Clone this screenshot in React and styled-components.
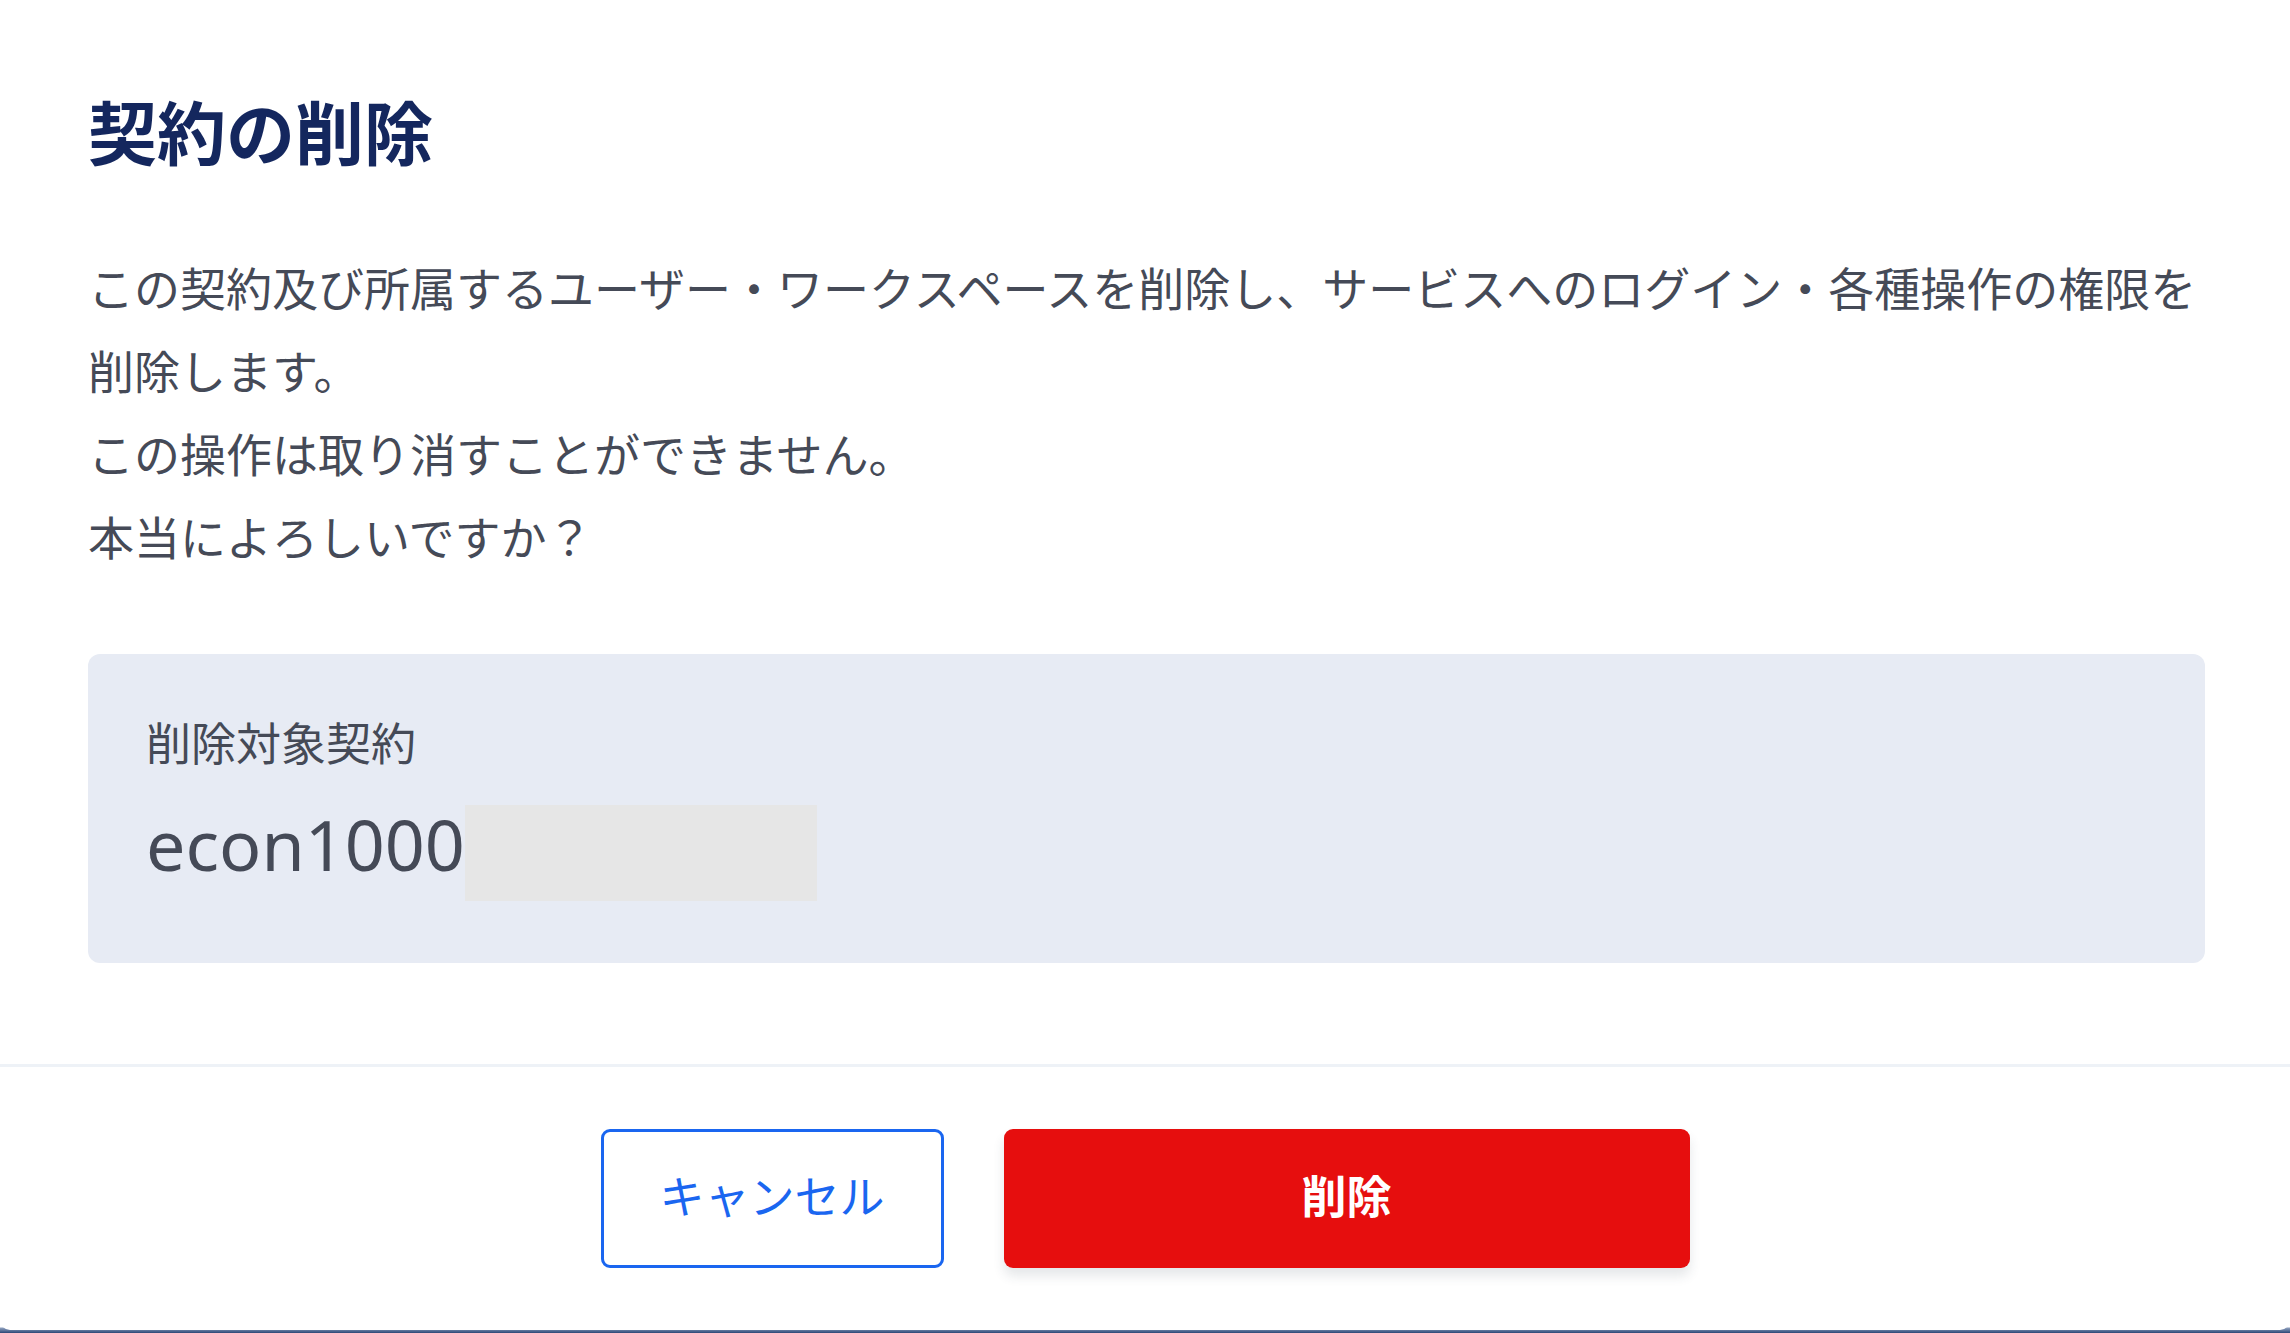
import React from "react";
import styled, { createGlobalStyle } from "styled-components";

const GlobalStyle = createGlobalStyle`
  * {
    box-sizing: border-box;
  }
  html, body {
    margin: 0;
    padding: 0;
  }
  body {
    background: #2f4b7b;
    font-family: "Noto Sans CJK JP", "Noto Sans", sans-serif;
  }
`

const Page = styled.div`
  display: flex;
  flex-direction: column;
  height: 1333px;
  padding-bottom: 5px;
  background: linear-gradient(to bottom, #ffffff 0, #ffffff calc(100% - 6px), #8d9fbd calc(100% - 5px), #2c4676 100%);
`
const Modal = styled.div`
  flex: 1;
  display: flex;
  flex-direction: column;
  background: #ffffff;
  border-radius: 0 0 10px 10px;
`
const Body = styled.div`
  padding: 96px 85px 101px 88px;
`
const Title = styled.h2`
  margin: 0;
  font-size: 69px;
  line-height: 68px;
  font-weight: 700;
  color: #14275e;
`
const Message = styled.p`
  margin: 81px -6px 0 0;
  font-size: 46px;
  line-height: 83px;
  color: #454a57;
`
const TargetBox = styled.div`
  margin-top: 77px;
  background: #e7ebf4;
  border-radius: 12px;
  padding: 58px 58px 62px 58px;
`
const TargetLabel = styled.div`
  font-size: 45px;
  line-height: 60px;
  color: #454a57;
`
const TargetValue = styled.div`
  display: flex;
  align-items: flex-start;
  margin-top: 33px;
  height: 96px;
`
const ValueText = styled.span`
  font-family: "Noto Sans", "Noto Sans CJK JP", sans-serif;
  font-size: 70px;
  line-height: 78px;
  color: #454a57;
`
const Redacted = styled.span`
  display: block;
  width: 352px;
  height: 96px;
  background: #e6e6e6;
`
const Footer = styled.div`
  display: flex;
  justify-content: center;
  gap: 60px;
  border-top: 3px solid #eef2f7;
  padding: 62px 0;
`
const Button = styled.button`
  width: ${p => p.$wide ? "686px" : "343px"};
  height: 139px;
  padding: 0 0 8px 0;
  border-radius: 9px;
  font-family: "Noto Sans CJK JP", sans-serif;
  font-size: 45px;
  cursor: pointer;
  ${p => p.$danger ? `
    background: #e60e0e;
    border: none;
    color: #ffffff;
    font-weight: 700;
    box-shadow: 0 8px 12px rgba(40, 60, 70, 0.12);
  ` : `
    background: #ffffff;
    border: 3px solid #1a66f0;
    color: #1a66f0;
    font-weight: 400;
  `}
`

function App() {
  return (
    <>
      <GlobalStyle />
      <Page>
        <Modal>
          <Body>
            <Title>契約の削除</Title>
            <Message>
              この契約及び所属するユーザー・ワークスペースを削除し、サービスへのログイン・各種操作の権限を削除します。<br />
              この操作は取り消すことができません。<br />
              本当によろしいですか？
            </Message>
            <TargetBox>
              <TargetLabel>削除対象契約</TargetLabel>
              <TargetValue>
                <ValueText>econ1000</ValueText>
                <Redacted />
              </TargetValue>
            </TargetBox>
          </Body>
          <Footer>
            <Button>キャンセル</Button>
            <Button $wide $danger>削除</Button>
          </Footer>
        </Modal>
      </Page>
    </>
  );
}

export default App;
